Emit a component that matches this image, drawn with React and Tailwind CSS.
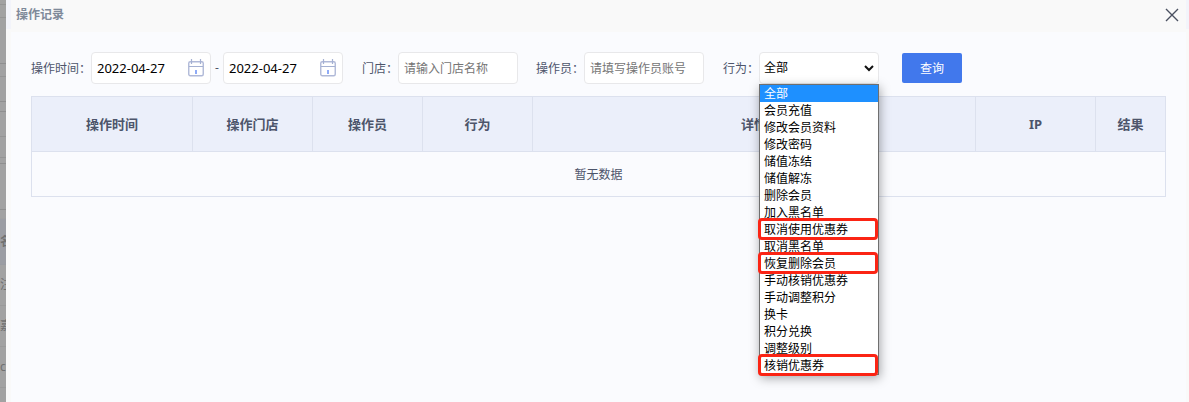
import React, { useState } from "react";

const ACTIONS = [
  { name: "全部" },
  { name: "会员充值" },
  { name: "修改会员资料" },
  { name: "修改密码" },
  { name: "储值冻结" },
  { name: "储值解冻" },
  { name: "删除会员" },
  { name: "加入黑名单" },
  { name: "取消使用优惠券", marked: true },
  { name: "取消黑名单" },
  { name: "恢复删除会员", marked: true },
  { name: "手动核销优惠券" },
  { name: "手动调整积分" },
  { name: "换卡" },
  { name: "积分兑换" },
  { name: "调整级别" },
  { name: "核销优惠券", marked: true },
];

const COLUMNS = [
  { name: "操作时间", width: "w-[161px]" },
  { name: "操作门店", width: "w-[120px]" },
  { name: "操作员", width: "w-[110px]" },
  { name: "行为", width: "w-[110px]" },
  { name: "详情", width: "" },
  { name: "IP", width: "w-[120px]" },
  { name: "结果", width: "w-[70px]" },
];

// Rows of the dimmed page that stay visible beside the dialog.
const BACKDROP_ROWS = [
  { size: "h-[5px] border-[#959595]" },
  { size: "h-[13px] border-[#959595]" },
  { size: "h-[46px] border-[#8f8f8f]" },
  { size: "h-[13px] border-[#959595]" },
  { size: "h-[25px] border-[#8f8f8f]" },
  { size: "h-[10px] border-[#8f8f8f]" },
  { size: "h-[25px] border-[#959595]" },
  { size: "h-[21px] border-[#959595]" },
  { size: "h-[6px] border-[#8f8f8f]" },
  { size: "h-[46px] border-[#8f8f8f]" },
  { size: "h-[9px] border-[#a0a0a0]" },
  { size: "h-[46px] border-[#999ba1] bg-[#9b9da3] font-bold", text: "名" },
  { size: "h-[41px] border-[#9a9a9a]", text: "注" },
  { size: "h-[41px] border-[#9a9a9a]", text: "嘉" },
  { size: "h-[41px] border-[#9a9a9a]", text: "cc" },
];

const FIELD =
  "h-8 w-[120px] rounded-[4px] border border-[#e8e8ea] bg-white px-[5px] outline-none";

function Backdrop() {
  return (
    <div aria-hidden="true" className="w-1.5 shrink-0 overflow-hidden text-[#707070]">
      {BACKDROP_ROWS.map((row, i) => (
        <div key={i} className={`flex items-center border-b ${row.size}`}>
          {row.text}
        </div>
      ))}
    </div>
  );
}

function CalendarIcon() {
  return (
    <svg
      className="pointer-events-none absolute right-[7px] top-1.5 h-5 w-4"
      viewBox="0 0 16 20"
      fill="none"
      aria-hidden="true"
    >
      <rect x="0.75" y="3.75" width="14.5" height="14" rx="1.5" stroke="#b0b9d8" strokeWidth="1.4" />
      <path d="M1 8.5H15" stroke="#a5b1d2" />
      <path d="M3.5 1V6M12.5 1V6" stroke="#a5b1d2" strokeWidth="1.2" />
      <rect x="7" y="12" width="2" height="4" fill="#8fabf7" />
    </svg>
  );
}

function DateField({ id, label }) {
  const [value, setValue] = useState("2022-04-27");
  return (
    <div className="relative">
      <input
        id={id}
        aria-label={label}
        className={`${FIELD} block text-[13px] text-black`}
        value={value}
        onChange={(e) => setValue(e.target.value)}
      />
      <CalendarIcon />
    </div>
  );
}

function ActionField() {
  const [action, setAction] = useState("全部");
  return (
    <div className="relative">
      <select
        id="action"
        className="block h-8 w-[120px] appearance-none rounded-[4px] border border-[#e8e8ea] bg-white px-1 text-xs text-black outline-none"
        value={action}
        onChange={(e) => setAction(e.target.value)}
      >
        {ACTIONS.map((a) => (
          <option key={a.name}>{a.name}</option>
        ))}
      </select>
      <svg
        className="pointer-events-none absolute right-1 top-3 h-2 w-3"
        viewBox="0 0 12 8"
        fill="none"
        aria-hidden="true"
      >
        <path d="M2 2L6 6L10 2" stroke="#111" strokeWidth="2" />
      </svg>
      <ul
        role="listbox"
        aria-label="行为"
        className="absolute left-0 top-8 z-10 w-[120px] border border-[#6f6f6f] bg-white text-xs text-black shadow-[1px_3px_10px_rgba(0,0,0,0.35)]"
      >
        {ACTIONS.map((a) => (
          <li
            key={a.name}
            role="option"
            aria-selected={a.name === action}
            onClick={() => setAction(a.name)}
            className={`relative h-[17px] px-1 leading-[17px] ${
              a.name === action ? "bg-[#1e90ff] text-white" : ""
            }`}
          >
            {a.name}
            {a.marked && (
              <span className="pointer-events-none absolute -bottom-0.5 -left-0.5 -top-[3px] right-0 rounded-[4px] border-[3px] border-[#fb2414]" />
            )}
          </li>
        ))}
      </ul>
    </div>
  );
}

export default function App() {
  return (
    <div className="flex min-h-screen bg-[#a2a2a2] font-['Noto_Sans','Noto_Sans_CJK_SC',sans-serif] text-xs text-[#4d556b]">
      <Backdrop />
      <main className="flex min-w-0 flex-1 flex-col bg-[#f9f9f9]">
        <header className="flex h-[29px] items-center justify-between border-l-[5px] border-r-[3px] border-[#f3f4fa] pl-[5px] pr-1.5">
          <h1 className="font-bold text-[#7f8a99]">操作记录</h1>
          <button type="button" aria-label="关闭">
            <svg className="h-4 w-4" viewBox="0 0 16 16" fill="none">
              <path d="M2 2L14 14M14 2L2 14" stroke="#4a5060" strokeWidth="1.4" />
            </svg>
          </button>
        </header>
        <section className="ml-[5px] mr-[3px] mt-[3px] flex-1 bg-[#fafbfe] px-5 pt-5">
          <form className="flex items-center" onSubmit={(e) => e.preventDefault()}>
            <label htmlFor="from" className="w-[60px] pt-0.5">操作时间：</label>
            <DateField id="from" label="开始日期" />
            <span className="w-3 text-center">-</span>
            <DateField id="to" label="结束日期" />
            <label htmlFor="store" className="ml-[19px] w-9 pt-0.5">门店：</label>
            <input id="store" className={`${FIELD} placeholder:text-[#757575]`} placeholder="请输入门店名称" />
            <label htmlFor="operator" className="ml-[18px] w-12 pt-0.5">操作员：</label>
            <input id="operator" className={`${FIELD} placeholder:text-[#757575]`} placeholder="请填写操作员账号" />
            <label htmlFor="action" className="ml-[19px] w-9 pt-0.5">行为：</label>
            <ActionField />
            <button type="submit" className="ml-[23px] h-[30px] w-[60px] rounded-[2px] bg-[#4178ec] pt-0.5 text-white">
              查询
            </button>
          </form>
          <table className="mt-3 w-full table-fixed border-collapse text-center">
            <thead>
              <tr className="h-[55px] bg-[#ebeffa] text-[13px]">
                {COLUMNS.map((c) => (
                  <th key={c.name} className={`border border-[#dce1ee] pt-0.5 font-bold ${c.width}`}>
                    {c.name}
                  </th>
                ))}
              </tr>
            </thead>
            <tbody>
              <tr className="h-[45px]">
                <td colSpan={7} className="border border-[#dce1ee] pt-0.5">暂无数据</td>
              </tr>
            </tbody>
          </table>
        </section>
      </main>
    </div>
  );
}
